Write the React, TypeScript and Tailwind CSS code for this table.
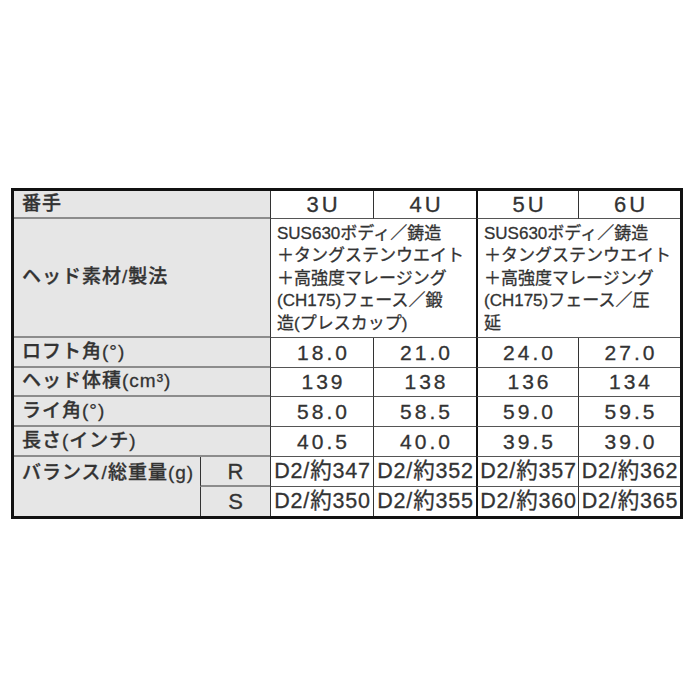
const font = "font-['Liberation_Sans','Noto_Sans_CJK_JP',sans-serif]"

const labelCls =
  'col-span-2 flex items-center bg-[#e6e6e6] pl-[8px] text-[19px] font-medium tracking-[1px] ' +
  'border-b-2 border-[#8c8c8c] whitespace-nowrap'

const valCls = 'flex items-center justify-center bg-white border-b border-[#555] text-[21px] tracking-[3px] pl-[3px]'

const rows = [
  { label: 'ロフト角(°)', values: ['18.0', '21.0', '24.0', '27.0'] },
  { label: 'ヘッド体積(cm³)', values: ['139', '138', '136', '134'] },
  { label: 'ライ角(°)', values: ['58.0', '58.5', '59.0', '59.5'] },
  { label: '長さ(インチ)', values: ['40.5', '40.0', '39.5', '39.0'] },
]

const weights = [
  { flex: 'R', values: ['D2/約347', 'D2/約352', 'D2/約357', 'D2/約362'], last: false },
  { flex: 'S', values: ['D2/約350', 'D2/約355', 'D2/約360', 'D2/約365'], last: true },
]

const material3 = ['SUS630ボディ／鋳造', '＋タングステンウエイト', '＋高強度マレージング', '(CH175)フェース／鍛', '造(プレスカップ)']
const material5 = ['SUS630ボディ／鋳造', '＋タングステンウエイト', '＋高強度マレージング', '(CH175)フェース／圧', '延']

// left divider of the 3U, 4U, 5U and 6U columns
const divider = ['border-l border-l-[#333]', 'border-l border-l-[#333]', 'border-l-2 border-l-[#111]', 'border-l border-l-[#333]']

function MaterialCell({ lines, left }: { lines: string[]; left: string }) {
  return (
    <div className={`col-span-2 flex flex-col justify-center bg-white border-b border-[#555] pl-[6px] pt-[2px] text-[17px] leading-[22.5px] whitespace-nowrap ${left}`}>
      {lines.map((l) => (
        <span key={l}>{l}</span>
      ))}
    </div>
  )
}

export default function App() {
  return (
    <div className={`min-h-[700px] bg-white pt-[188px] pl-[11px] text-[#333] [-webkit-text-stroke:0.3px_#333] ${font}`}>
      <div className="w-[672px] border-[3px] border-[#111] bg-[#e6e6e6]">
        <div className="grid grid-cols-[186px_70px_103px_103px_102px_102px] grid-rows-[28px_119px_30px_29px_30px_30px_30px_29px]">
          {/* header */}
          <div className={labelCls}>番手</div>
          {['3U', '4U', '5U', '6U'].map((h, i) => (
            <div key={h} className={`flex items-center justify-center bg-white border-b border-[#555] text-[22px] tracking-[3px] pl-[3px] ${divider[i]}`}>
              {h}
            </div>
          ))}

          {/* head material */}
          <div className={labelCls}>ヘッド素材/製法</div>
          <MaterialCell lines={material3} left={divider[0]} />
          <MaterialCell lines={material5} left={divider[2]} />

          {rows.map((r) => (
            <div key={r.label} className="contents">
              <div className={labelCls}>{r.label}</div>
              {r.values.map((v, i) => (
                <div key={i} className={`${valCls} ${divider[i]}`}>{v}</div>
              ))}
            </div>
          ))}

          {/* balance / total weight */}
          <div className="row-span-2 row-start-7 col-start-1 flex items-start bg-[#e6e6e6] pl-[8px] pt-[2px] text-[19px] font-medium tracking-[1px] whitespace-nowrap">
            バランス/総重量(g)
          </div>
          {weights.map((w, r) => (
            <div key={w.flex} className="contents">
              <div
                className={`flex items-center justify-center border-l border-l-[#333] text-[22px] ${w.last ? '' : 'border-b-2 border-[#8c8c8c]'}`}
                style={{ gridRowStart: 7 + r, gridColumnStart: 2 }}
              >
                {w.flex}
              </div>
              {w.values.map((v, i) => (
                <div
                  key={i}
                  className={`flex items-center justify-center bg-white text-[21.5px] tracking-[0.8px] pl-[1px] whitespace-nowrap ${w.last ? '' : 'border-b border-[#555]'} ${divider[i]}`}
                >
                  {v}
                </div>
              ))}
            </div>
          ))}
        </div>
      </div>
    </div>
  )
}
